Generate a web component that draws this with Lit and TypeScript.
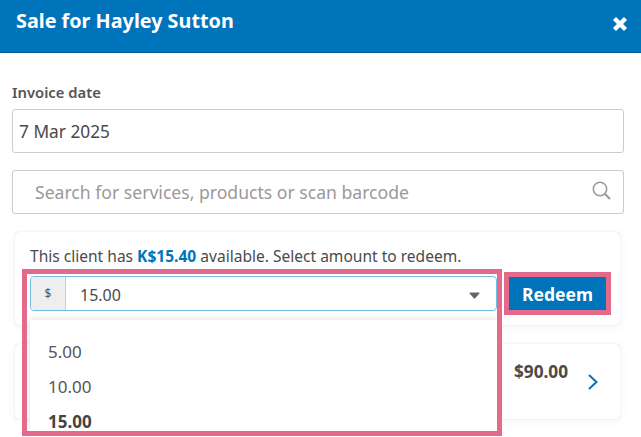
import { LitElement, html, css } from "lit";
import { customElement } from "lit/decorators.js";

@customElement("app-root")
export class AppRoot extends LitElement {
  static styles = css`
    :host { display: block; position: relative; width: 641px; height: 437px; overflow: hidden; background: #fff; font-family: "Noto Sans", "Open Sans", sans-serif; color: #4a4a4a; }
    * { box-sizing: border-box; }
    .header { height: 53px; background: #0074bb; border-bottom: 1px solid #005a92; display: flex; justify-content: space-between; padding: 0 13px 0 16px; color: #fff; }
    .title { font-size: 19.8px; font-weight: 700; line-height: 22px; margin-top: 10px; }
    .close { margin-top: 16px; width: 16px; height: 16px; }
    .body { padding: 29px 17px 0 12px; display: flex; flex-direction: column; }
    .label { font-size: 14.8px; font-weight: 600; line-height: 20px; color: #555; margin-bottom: 7px; }
    .input { height: 44px; border: 1px solid #ccc; border-radius: 3px; display: flex; align-items: center; font-size: 17.3px; padding: 0 6px; background: #fff; justify-content: space-between; }
    .search { margin-top: 17px; color: #999; padding: 0 12px 0 22px; font-size: 17.6px; }
    .search svg { width: 19px; height: 19px; margin-bottom: 3px; }
    .card { background: #fff; border-radius: 4px; margin: 18px 4px 0 3px; box-shadow: 0 0 1px rgba(0,0,0,.25), 0 2px 10px rgba(30,60,90,.06); }
    .redeem-card { height: 93px; padding: 14px 14px 0 15px; position: relative; }
    .msg { font-size: 15.55px; line-height: 20px; color: #4a4a4a; }
    .msg b { color: #0074bb; font-weight: 700; }
    .row { display: flex; margin-top: 10px; gap: 12px; }
    .select { width: 467px; height: 35px; border: 1px solid #75bce4; border-radius: 4px; display: flex; align-items: stretch; background: #fff; }
    .addon { width: 35px; background: #eee; border-right: 1px solid #ccc; border-radius: 3px 0 0 3px; font-size: 12px; display: flex; align-items: center; justify-content: center; color: #555; }
    .value { flex: 1; padding-left: 14px; font-size: 16px; line-height: 36px; }
    .caret { width: 11px; height: 7px; margin: 15px 16px 0 0; }
    .btn { width: 97px; height: 33px; margin-top: 1px; background: #0074bb; color: #fff; font-weight: 700; font-size: 17.5px; display: flex; align-items: center; justify-content: center; }
    .item-card { height: 75px; margin-top: 19px; position: relative; display: flex; justify-content: flex-end; padding: 16px 22px 0 0; gap: 19px; }
    .price { font-size: 17.2px; font-weight: 700; line-height: 24px; color: #4a4a4a; }
    .chev { width: 11px; height: 16px; margin-top: 14px; }
    .menu { position: absolute; left: 30px; top: 320px; width: 467px; height: 117px; background: #fff; box-shadow: 0 -1px 6px rgba(0,0,0,.12); padding-top: 14px; font-size: 17px; }
    .opt { height: 35px; line-height: 35px; padding-left: 18px; color: #555; }
    .opt.sel { font-weight: 700; color: #444; }
    .hl { position: absolute; border: 5px solid #e46a8b; pointer-events: none; }
    .hl.a { left: 22px; top: 269px; width: 480px; height: 167px; }
    .hl.b { left: 504px; top: 272px; width: 107px; height: 43px; }
  `;

  render() {
    return html`
      <div class="header">
        <div class="title">Sale for Hayley Sutton</div>
        <svg class="close" viewBox="0 0 16 16"><path d="M2.5 2.5L13.5 13.5M13.5 2.5L2.5 13.5" stroke="#fff" stroke-width="4.4" fill="none"/></svg>
      </div>
      <div class="body">
        <div class="label">Invoice date</div>
        <div class="input">7 Mar 2025</div>
        <div class="input search">
          <span>Search for services, products or scan barcode</span>
          <svg viewBox="0 0 19 19" fill="none" stroke="#999" stroke-width="1.6"><circle cx="8" cy="8" r="6.7"/><path d="M12.8 12.8L18 18" stroke-width="2"/></svg>
        </div>
        <div class="card redeem-card">
          <div class="msg">This client has <b>K$15.40</b> available. Select amount to redeem.</div>
          <div class="row">
            <div class="select">
              <div class="addon">$</div>
              <div class="value">15.00</div>
              <svg class="caret" viewBox="0 0 11 7"><path d="M1 0.5H10Q11 0.5 10.4 1.5L6.2 6.2Q5.5 7 4.8 6.2L0.6 1.5Q0 0.5 1 0.5Z" fill="#666"/></svg>
            </div>
            <div class="btn">Redeem</div>
          </div>
        </div>
        <div class="card item-card">
          <div class="price">$90.00</div>
          <svg class="chev" viewBox="0 0 11 16" fill="none" stroke="#0074bb" stroke-width="2"><path d="M2 1L9.5 8L2 15"/></svg>
        </div>
      </div>
      <div class="menu">
        <div class="opt">5.00</div>
        <div class="opt">10.00</div>
        <div class="opt sel">15.00</div>
      </div>
      <div class="hl a"></div>
      <div class="hl b"></div>
    `;
  }
}
